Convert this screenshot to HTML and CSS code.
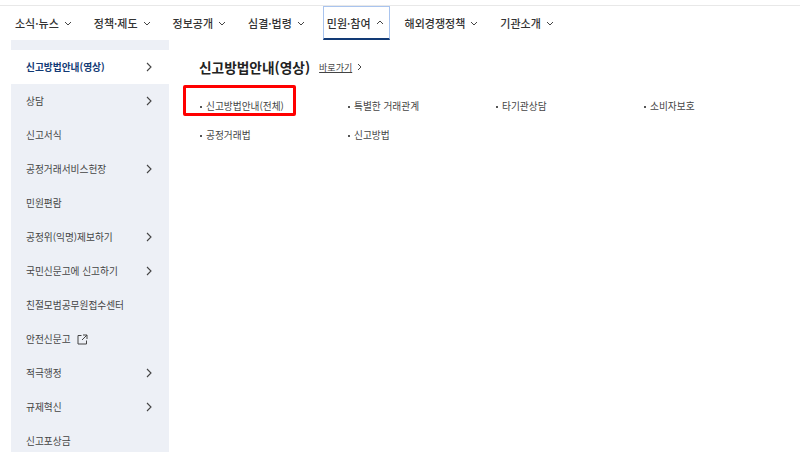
FILE: index.html
```html
<!DOCTYPE html>
<html lang="ko">
<head>
    <meta charset="UTF-8">
    <title>신고방법안내(영상)</title>
    <link rel="stylesheet" href="styles.css">
</head>
<body>
    <!-- 상단 메뉴 -->
    <nav class="top-nav">
        <a class="nav-item">소식·뉴스 <svg class="chev" viewBox="0 0 8 5"><path d="M1 1l3 3 3-3"/></svg></a>
        <a class="nav-item">정책·제도 <svg class="chev" viewBox="0 0 8 5"><path d="M1 1l3 3 3-3"/></svg></a>
        <a class="nav-item">정보공개 <svg class="chev" viewBox="0 0 8 5"><path d="M1 1l3 3 3-3"/></svg></a>
        <a class="nav-item">심결·법령 <svg class="chev" viewBox="0 0 8 5"><path d="M1 1l3 3 3-3"/></svg></a>
        <a class="nav-item active">민원·참여 <svg class="chev" viewBox="0 0 8 5"><path d="M1 4l3-3 3 3"/></svg></a>
        <a class="nav-item">해외경쟁정책 <svg class="chev" viewBox="0 0 8 5"><path d="M1 1l3 3 3-3"/></svg></a>
        <a class="nav-item">기관소개 <svg class="chev" viewBox="0 0 8 5"><path d="M1 1l3 3 3-3"/></svg></a>
    </nav>

    <div class="page">
        <!-- 왼쪽 메뉴 -->
        <aside class="side-menu">
            <a class="side-item current">신고방법안내(영상) <svg class="arrow" viewBox="0 0 6 10"><path d="M1 1l4 4-4 4"/></svg></a>
            <a class="side-item">상담 <svg class="arrow" viewBox="0 0 6 10"><path d="M1 1l4 4-4 4"/></svg></a>
            <a class="side-item">신고서식</a>
            <a class="side-item">공정거래서비스헌장 <svg class="arrow" viewBox="0 0 6 10"><path d="M1 1l4 4-4 4"/></svg></a>
            <a class="side-item">민원편람</a>
            <a class="side-item">공정위(익명)제보하기 <svg class="arrow" viewBox="0 0 6 10"><path d="M1 1l4 4-4 4"/></svg></a>
            <a class="side-item">국민신문고에 신고하기 <svg class="arrow" viewBox="0 0 6 10"><path d="M1 1l4 4-4 4"/></svg></a>
            <a class="side-item">친절모범공무원접수센터</a>
            <a class="side-item">
                <span class="with-icon">안전신문고
                    <svg class="ext" viewBox="0 0 11 11"><path d="M4.500 1.500H1v8.500h8.500V6.500M6 1h4v4M10 1L5 6"/></svg>
                </span>
            </a>
            <a class="side-item">적극행정 <svg class="arrow" viewBox="0 0 6 10"><path d="M1 1l4 4-4 4"/></svg></a>
            <a class="side-item">규제혁신 <svg class="arrow" viewBox="0 0 6 10"><path d="M1 1l4 4-4 4"/></svg></a>
            <a class="side-item">신고포상금</a>
        </aside>

        <!-- 본문 -->
        <main class="content">
            <div class="title-row">
                <h2>신고방법안내(영상)</h2>
                <a class="go-link">바로가기</a>
                <svg class="go-arrow" viewBox="0 0 5 8"><path d="M1 1l3 3-3 3"/></svg>
            </div>
            <ul class="link-grid">
                <li class="marked">신고방법안내(전체)</li>
                <li>특별한 거래관계</li>
                <li>타기관상담</li>
                <li>소비자보호</li>
                <li>공정거래법</li>
                <li>신고방법</li>
            </ul>
        </main>
    </div>
</body>
</html>
```

FILE: styles.css
```css
body {
    margin: 0;
    height: 452px;
    overflow: hidden;
    background: #fff;
    font-family: "Noto Sans CJK KR", "Noto Sans", sans-serif;
    color: #333;
}

/* 상단 메뉴 */
.top-nav {
    display: flex;
    height: 34px;
    margin-top: 5px;
    border-top: 1px solid #e8e8e8;
    padding-left: 11px;
}

.nav-item {
    display: flex;
    align-items: center;
    gap: 5px;
    box-sizing: border-box;
    height: 34px;
    padding: 0 4px;
    margin-right: 14px;
    font-size: 11px;
    font-weight: 500;
    color: #333;
    white-space: nowrap;
}

.nav-item.active {
    margin-right: 11px;
    border: 1px solid #a9c4ee;
    border-bottom: 2px solid #123a75;
    padding: 0 5px 0 3px;
}

.chev {
    width: 8px;
    height: 5px;
    fill: none;
    stroke: #444;
    stroke-width: 1;
}

/* 왼쪽 메뉴 */
.page {
    display: flex;
}

.side-menu {
    width: 158px;
    margin-left: 11px;
    padding-top: 10px;
    background: #edf0f6;
    flex-shrink: 0;
}

.side-item {
    display: flex;
    align-items: center;
    justify-content: space-between;
    box-sizing: border-box;
    height: 34px;
    padding: 0 17px 0 15px;
    font-size: 9.700px;
    color: #444;
    white-space: nowrap;
}

.side-item.current {
    background: #fff;
    color: #123a75;
    font-weight: 700;
}

.arrow {
    width: 6px;
    height: 10px;
    fill: none;
    stroke: #444;
    stroke-width: 1.1;
}

.with-icon {
    display: flex;
    align-items: center;
    gap: 6px;
}

.ext {
    width: 11px;
    height: 11px;
    fill: none;
    stroke: #444;
    stroke-width: 1;
}

/* 본문 */
.content {
    flex: 1;
    padding: 15px 0 0 30px;
}

.title-row {
    display: flex;
    align-items: center;
    height: 24px;
}

.title-row h2 {
    margin: 0 9px 0 0;
    font-size: 13.700px;
    font-weight: 700;
    color: #222;
}

.go-link {
    font-size: 9px;
    color: #444;
    text-decoration: underline;
}

.go-arrow {
    width: 5px;
    height: 8px;
    margin-left: 5px;
    fill: none;
    stroke: #444;
    stroke-width: 1;
}

.link-grid {
    display: grid;
    grid-template-columns: repeat(4, 148px);
    grid-auto-rows: 29px;
    list-style: none;
    margin: 13px 0 0 -15px;
    padding: 0 0 0 15px;
    font-size: 9.700px;
    color: #444;
}

.link-grid li {
    position: relative;
    padding-left: 7px;
    line-height: 29px;
}

.link-grid li::before {
    content: "";
    position: absolute;
    left: 1px;
    top: 14px;
    width: 2px;
    height: 2px;
    background: #555;
}

/* 빨간 표시 */
.marked::after {
    content: "";
    position: absolute;
    left: -16px;
    top: -7px;
    width: 107px;
    height: 25px;
    border: 3px solid #f00;
    border-radius: 2px;
}
```
